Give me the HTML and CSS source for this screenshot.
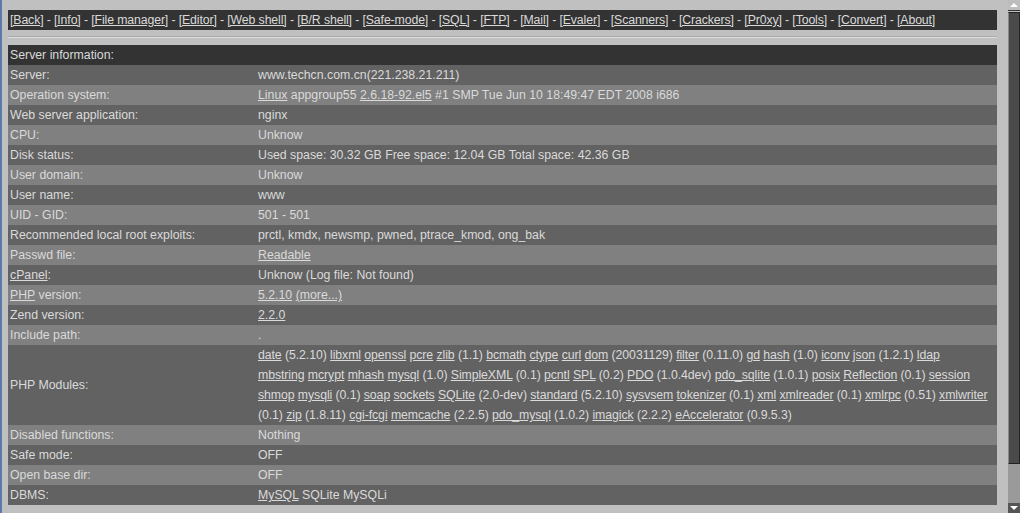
FILE: index.html
```html
<!DOCTYPE html>
<html>
<head>
<meta charset="utf-8">
<title>Server information</title>
<link rel="stylesheet" href="styles.css">
</head>
<body>
<div class="page">
  <div class="main">
    <div class="nav"><a href="#">[Back]</a> - <a href="#">[Info]</a> - <a href="#">[File manager]</a> - <a href="#">[Editor]</a> - <a href="#">[Web shell]</a> - <a href="#">[B/R shell]</a> - <a href="#">[Safe-mode]</a> - <a href="#">[SQL]</a> - <a href="#">[FTP]</a> - <a href="#">[Mail]</a> - <a href="#">[Evaler]</a> - <a href="#">[Scanners]</a> - <a href="#">[Crackers]</a> - <a href="#">[Pr0xy]</a> - <a href="#">[Tools]</a> - <a href="#">[Convert]</a> - <a href="#">[About]</a></div>
    <div class="sep"></div>
    <table class="info">
      <colgroup><col class="c-label"><col></colgroup>
      <tr class="head"><td colspan="2">Server information:</td></tr>
      <tr class="dark"><td>Server:</td><td>www.techcn.com.cn(221.238.21.211)</td></tr>
      <tr class="light"><td>Operation system:</td><td><a href="#">Linux</a> appgroup55 <a href="#">2.6.18-92.el5</a> #1 SMP Tue Jun 10 18:49:47 EDT 2008 i686</td></tr>
      <tr class="dark"><td>Web server application:</td><td>nginx</td></tr>
      <tr class="light"><td>CPU:</td><td>Unknow</td></tr>
      <tr class="dark"><td>Disk status:</td><td>Used spase: 30.32 GB Free space: 12.04 GB Total space: 42.36 GB</td></tr>
      <tr class="light"><td>User domain:</td><td>Unknow</td></tr>
      <tr class="dark"><td>User name:</td><td>www</td></tr>
      <tr class="light"><td>UID - GID:</td><td>501 - 501</td></tr>
      <tr class="dark"><td>Recommended local root exploits:</td><td>prctl, kmdx, newsmp, pwned, ptrace_kmod, ong_bak</td></tr>
      <tr class="light"><td>Passwd file:</td><td><a href="#">Readable</a></td></tr>
      <tr class="dark"><td><a href="#">cPanel</a>:</td><td>Unknow (Log file: Not found)</td></tr>
      <tr class="light"><td><a href="#">PHP</a> version:</td><td><a href="#">5.2.10</a> <a href="#">(more...)</a></td></tr>
      <tr class="dark"><td>Zend version:</td><td><a href="#">2.2.0</a></td></tr>
      <tr class="light"><td>Include path:</td><td>.</td></tr>
      <tr class="dark"><td>PHP Modules:</td><td class="modules"><a href="#">date</a> (5.2.10) <a href="#">libxml</a> <a href="#">openssl</a> <a href="#">pcre</a> <a href="#">zlib</a> (1.1) <a href="#">bcmath</a> <a href="#">ctype</a> <a href="#">curl</a> <a href="#">dom</a> (20031129) <a href="#">filter</a> (0.11.0) <a href="#">gd</a> <a href="#">hash</a> (1.0) <a href="#">iconv</a> <a href="#">json</a> (1.2.1) <a href="#">ldap</a><br><a href="#">mbstring</a> <a href="#">mcrypt</a> <a href="#">mhash</a> <a href="#">mysql</a> (1.0) <a href="#">SimpleXML</a> (0.1) <a href="#">pcntl</a> <a href="#">SPL</a> (0.2) <a href="#">PDO</a> (1.0.4dev) <a href="#">pdo_sqlite</a> (1.0.1) <a href="#">posix</a> <a href="#">Reflection</a> (0.1) <a href="#">session</a><br><a href="#">shmop</a> <a href="#">mysqli</a> (0.1) <a href="#">soap</a> <a href="#">sockets</a> <a href="#">SQLite</a> (2.0-dev) <a href="#">standard</a> (5.2.10) <a href="#">sysvsem</a> <a href="#">tokenizer</a> (0.1) <a href="#">xml</a> <a href="#">xmlreader</a> (0.1) <a href="#">xmlrpc</a> (0.51) <a href="#">xmlwriter</a><br>(0.1) <a href="#">zip</a> (1.8.11) <a href="#">cgi-fcgi</a> <a href="#">memcache</a> (2.2.5) <a href="#">pdo_mysql</a> (1.0.2) <a href="#">imagick</a> (2.2.2) <a href="#">eAccelerator</a> (0.9.5.3)</td></tr>
      <tr class="light"><td>Disabled functions:</td><td>Nothing</td></tr>
      <tr class="dark"><td>Safe mode:</td><td>OFF</td></tr>
      <tr class="light"><td>Open base dir:</td><td>OFF</td></tr>
      <tr class="dark"><td>DBMS:</td><td><a href="#">MySQL</a> SQLite MySQLi</td></tr>
    </table>
  </div>
  <div class="scrollbar">
    <div class="sb-btn sb-up"><svg width="12" height="10" viewBox="0 0 12 10"><polygon points="2,7 10,7 6,3" fill="#ffffff"/></svg></div>
    <div class="sb-thumb"></div>
    <div class="sb-track"></div>
    <div class="sb-btn sb-down"><svg width="12" height="10" viewBox="0 0 12 10"><polygon points="2,3 10,3 6,7" fill="#ffffff"/></svg></div>
  </div>
</div>
</body>
</html>
```
FILE: styles.css
```css
html, body {
  margin: 0;
  padding: 0;
  height: 513px;
  overflow: hidden;
  background: #c0c0c0;
}
.page {
  display: flex;
  height: 513px;
  font-family: "Liberation Sans", Arial, sans-serif;
  font-size: 12.3px;
  color: #dadada;
}
.main {
  flex: 1;
  min-width: 0;
  padding: 10px 11px 0 6px;
  border-left: 2px solid #5a7aa8;
}
a {
  color: #dadada;
  text-decoration: underline;
}
.nav {
  background: #333333;
  height: 20px;
  line-height: 20px;
  padding-left: 2px;
  white-space: nowrap;
  overflow: hidden;
  letter-spacing: -0.12px;
}
.sep {
  margin-top: 6px;
  margin-bottom: 7px;
  border-top: 1px solid #a9a9a9;
  border-bottom: 1px solid #dedede;
}
.info {
  width: 100%;
  table-layout: fixed;
  border-collapse: collapse;
  border-spacing: 0;
}
.c-label {
  width: 248px;
}
.info td {
  padding: 0 2px;
  height: 20px;
  line-height: 20px;
  vertical-align: middle;
  white-space: nowrap;
  overflow: hidden;
}
.info td.modules {
  letter-spacing: -0.08px;
}
.head td {
  background: #333333;
}
.dark td {
  background: #626262;
}
.light td {
  background: #808080;
}
.scrollbar {
  width: 12px;
  flex-shrink: 0;
  display: flex;
  flex-direction: column;
  background: #c0c0c0;
}
.sb-btn {
  height: 10px;
  background: #bdbdbd;
}
.sb-up {
  border-bottom: 1px solid #333;
}
.sb-down {
  background: #555555;
}
.sb-btn svg {
  display: block;
}
.sb-thumb {
  height: 450px;
  margin-top: 1px;
  background: #4a4a4a;
  border: 1px solid #222;
  border-left: 1px solid #888;
}
.sb-track {
  flex: 1;
  background: #9a9a9a;
}
```
